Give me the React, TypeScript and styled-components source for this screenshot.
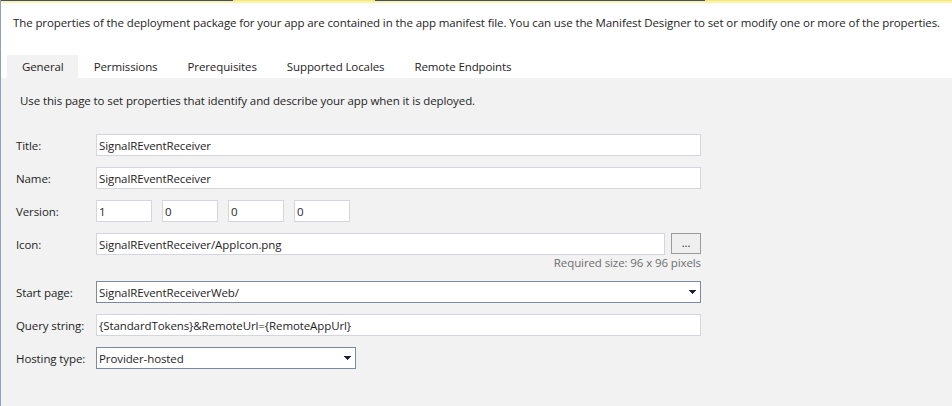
import styled, { createGlobalStyle } from "styled-components";

const GlobalStyle = createGlobalStyle`
  html, body {
    margin: 0;
    padding: 0;
    background: #f2f2f2;
  }
  body {
    font-family: "Open Sans", "Noto Sans", sans-serif;
    font-size: 11.5px;
    letter-spacing: -0.1px;
    color: #1e1e1e;
  }
`;

const Frame = styled.div`
  width: 952px;
  height: 406px;
  box-sizing: border-box;
  overflow: hidden;
  display: flex;
  flex-direction: column;
  background: #f2f2f2;
  border-left: 1px solid #8e9fc0;
`;

const TopStrip = styled.div`
  display: flex;
  height: 3px;
  flex: 0 0 3px;
  background: #fdf3a6;
`;

const StripSegment = styled.div<{ $width?: number; $navy?: boolean }>`
  flex: ${({ $width }) => ($width ? `0 0 ${$width}px` : "1 1 0")};
  border-top: 1px solid ${({ $navy }) => ($navy ? "#3d4f73" : "#f5e77e")};
`;

const Header = styled.div`
  background: #fff;
  padding: 12px 0 0 12px;
  box-sizing: border-box;
  flex: 0 0 52px;
  line-height: 16px;
  white-space: nowrap;
`;

const TabStrip = styled.div`
  display: flex;
  background: #fff;
  padding-left: 6px;
  flex: 0 0 23px;
`;

const Tab = styled.div<{ $active?: boolean }>`
  display: flex;
  align-items: center;
  padding: 0 14px 1px 15px;
  margin-right: 1px;
  background: ${({ $active }) => ($active ? "#f2f2f2" : "#fff")};
`;

const Content = styled.div`
  flex: 1;
  padding: 15px 0 0 15px;
`;

const Intro = styled.div`
  margin-left: 4px;
  margin-bottom: 25px;
  line-height: 16px;
`;

const Form = styled.div`
  display: grid;
  grid-template-columns: 80px 605px;
  row-gap: 11px;
  align-items: center;
`;

const Label = styled.div`
  line-height: 20px;
  padding-top: 2px;
`;

const Field = styled.div<{ $width?: number; $strong?: boolean }>`
  box-sizing: border-box;
  height: 22px;
  width: ${({ $width }) => ($width ? `${$width}px` : "100%")};
  background: #fff;
  border: 1px solid ${({ $strong }) => ($strong ? "#7a8aa0" : "#d3d6df")};
  padding: 0 4px 0 2px;
  display: flex;
  align-items: center;
  white-space: nowrap;
`;

const FieldText = styled.span`
  flex: 1;
`;

const VersionRow = styled.div`
  display: flex;
  gap: 10px;
`;

const IconRow = styled.div`
  display: flex;
  gap: 6px;
`;

const BrowseButton = styled.div`
  box-sizing: border-box;
  width: 30px;
  height: 21px;
  border: 1px solid #9b9b9b;
  background: #efefef;
  display: flex;
  align-items: center;
  justify-content: center;
  font-size: 11px;
  line-height: 1;
  padding-bottom: 3px;
`;

const Hint = styled.div`
  grid-column: 2;
  text-align: right;
  color: #6e6e6e;
  margin-top: -10px;
  line-height: 14px;
`;

const Arrow = () => (
  <svg width="7" height="4" viewBox="0 0 7 4" shapeRendering="crispEdges">
    <rect x="0" y="0" width="7" height="1" fill="#1e2140" />
    <rect x="1" y="1" width="5" height="1" fill="#1e2140" />
    <rect x="2" y="2" width="3" height="1" fill="#1e2140" />
    <rect x="3" y="3" width="1" height="1" fill="#1e2140" />
  </svg>
);

const tabs = [
  "General",
  "Permissions",
  "Prerequisites",
  "Supported Locales",
  "Remote Endpoints",
];

const version = ["1", "0", "0", "0"];

export default function App() {
  return (
    <>
      <GlobalStyle />
      <Frame>
        <TopStrip>
          <StripSegment $width={232} $navy />
          <StripSegment $width={142} />
          <StripSegment $width={330} $navy />
          <StripSegment />
        </TopStrip>
        <Header>
          The properties of the deployment package for your app are contained
          in the app manifest file. You can use the Manifest Designer to set or
          modify one or more of the properties.
        </Header>
        <TabStrip>
          {tabs.map((t, i) => (
            <Tab key={t} $active={i === 0}>
              {t}
            </Tab>
          ))}
        </TabStrip>
        <Content>
          <Intro>
            Use this page to set properties that identify and describe your app
            when it is deployed.
          </Intro>
          <Form>
            <Label>Title:</Label>
            <Field>SignalREventReceiver</Field>

            <Label>Name:</Label>
            <Field>SignalREventReceiver</Field>

            <Label>Version:</Label>
            <VersionRow>
              {version.map((v, i) => (
                <Field key={i} $width={56}>
                  {v}
                </Field>
              ))}
            </VersionRow>

            <Label>Icon:</Label>
            <IconRow>
              <Field $width={569}>SignalREventReceiver/AppIcon.png</Field>
              <BrowseButton>...</BrowseButton>
            </IconRow>
            <Hint>Required size: 96 x 96 pixels</Hint>

            <Label>Start page:</Label>
            <Field $strong>
              <FieldText>SignalREventReceiverWeb/</FieldText>
              <Arrow />
            </Field>

            <Label>Query string:</Label>
            <Field>{"{StandardTokens}&RemoteUrl={RemoteAppUrl}"}</Field>

            <Label>Hosting type:</Label>
            <Field $strong $width={260}>
              <FieldText>Provider-hosted</FieldText>
              <Arrow />
            </Field>
          </Form>
        </Content>
      </Frame>
    </>
  );
}
